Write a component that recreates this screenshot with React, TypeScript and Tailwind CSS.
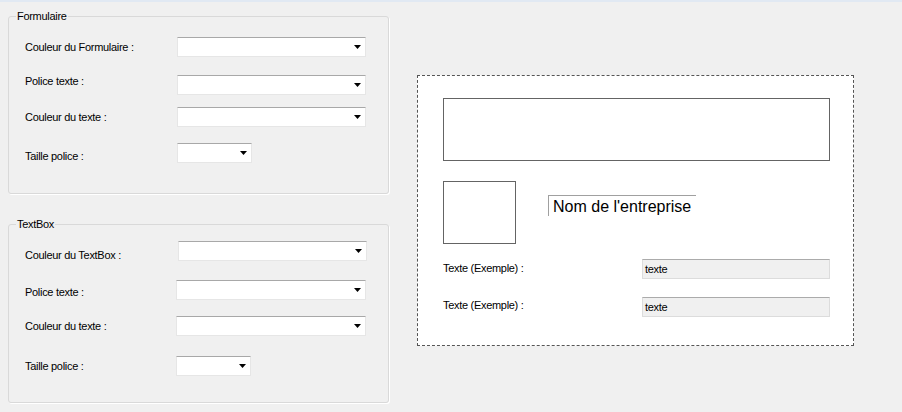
import React from 'react';

const font = { fontFamily: '"Liberation Sans", Arial, sans-serif' };

function Combo({ width, className = '' }: { width: string; className?: string }) {
  return (
    <div
      className={`relative h-[20px] ${width} shrink-0 bg-white border border-[#e6e6e6] border-t-[#a8a8a8] ${className}`}
    >
      <svg
        className="absolute right-[4px] top-[7px]"
        width="7"
        height="4"
        viewBox="0 0 7 4"
      >
        <polygon points="0,0 7,0 3.5,4" fill="#000" />
      </svg>
    </div>
  );
}

interface Row {
  label: string;
  rowMt: string;
  labelMt: string;
  width: string;
  comboClass?: string;
}

function Group({ title, rows, height }: { title: string; rows: Row[]; height: string }) {
  return (
    <fieldset
      className={`w-[381px] ${height} border border-[#d9d9d9] rounded-[3px] shadow-[1px_1px_0_#ffffff]`}
    >
      <legend className="ml-[7px] px-[1px] text-[11px] leading-[13px] tracking-[-0.3px] text-black">
        {title}
      </legend>
      {rows.map((r) => (
        <div key={r.label} className={`flex items-start ${r.rowMt}`}>
          <span
            className={`ml-[16px] w-[152px] shrink-0 text-[11px] leading-[13px] tracking-[-0.3px] text-black ${r.labelMt}`}
          >
            {r.label}
          </span>
          <Combo width={r.width} className={r.comboClass} />
        </div>
      ))}
    </fieldset>
  );
}

export default function App() {
  const formRows: Row[] = [
    { label: 'Couleur du Formulaire :', rowMt: 'mt-[14px]', labelMt: 'mt-[4px]', width: 'w-[189px]' },
    { label: 'Police texte :', rowMt: 'mt-[18px]', labelMt: 'mt-0', width: 'w-[189px]' },
    { label: 'Couleur du texte :', rowMt: 'mt-[12px]', labelMt: 'mt-[4px]', width: 'w-[189px]' },
    { label: 'Taille police :', rowMt: 'mt-[16px]', labelMt: 'mt-[7px]', width: 'w-[75px]' },
  ];

  const textBoxRows: Row[] = [
    { label: 'Couleur du TextBox :', rowMt: 'mt-[10px]', labelMt: 'mt-[8px]', width: 'w-[189px]', comboClass: 'ml-px' },
    { label: 'Police texte :', rowMt: 'mt-[18px]', labelMt: 'mt-[6px]', width: 'w-[190px]', comboClass: '-ml-px' },
    { label: 'Couleur du texte :', rowMt: 'mt-[16px]', labelMt: 'mt-[4px]', width: 'w-[190px]', comboClass: '-ml-px' },
    { label: 'Taille police :', rowMt: 'mt-[20px]', labelMt: 'mt-[4px]', width: 'w-[75px]', comboClass: '-ml-px' },
  ];

  return (
    <div className="w-[902px] h-[412px] bg-[#f0f0f0] overflow-hidden" style={font}>
      <div className="h-[2px] bg-[#e1e9f3]" />
      <div className="flex items-start">
        {/* Colonne gauche */}
        <div className="ml-[8px] mt-[8px] flex flex-col gap-[24px]">
          <Group title="Formulaire" rows={formRows} height="h-[184px]" />
          <Group title="TextBox" rows={textBoxRows} height="h-[185px]" />
        </div>

        {/* Aperçu */}
        <div className="ml-[28px] mt-[73px] w-[437px] h-[271px] bg-white border border-dashed border-[#555555] pl-[25px] pt-[22px]">
          <div className="w-[387px] h-[63px] border border-[#646464]" />
          <div className="flex items-start mt-[20px]">
            <div className="w-[73px] h-[63px] border border-[#646464] shrink-0" />
            <div className="ml-[32px] mt-[14px] w-[148px] h-[21px] border-t border-l border-[#a0a0a0] pl-[4px] pt-[2px] text-[16px] leading-[18px] text-black whitespace-nowrap">
              Nom de l'entreprise
            </div>
          </div>
          <div className="flex items-start mt-[15px]">
            <span className="w-[199px] mt-[3px] shrink-0 text-[11px] leading-[13px] tracking-[-0.3px] text-black">
              Texte (Exemple) :
            </span>
            <div className="w-[188px] h-[20px] bg-[#f0f0f0] border border-[#dcdcdc] border-t-[#ababab] pl-[2px] flex items-center text-[11px] leading-[13px] tracking-[-0.3px] text-black">
              texte
            </div>
          </div>
          <div className="flex items-start mt-[18px]">
            <span className="w-[199px] mt-[2px] shrink-0 text-[11px] leading-[13px] tracking-[-0.3px] text-black">
              Texte (Exemple) :
            </span>
            <div className="w-[188px] h-[20px] bg-[#f0f0f0] border border-[#dcdcdc] border-t-[#ababab] pl-[2px] flex items-center text-[11px] leading-[13px] tracking-[-0.3px] text-black">
              texte
            </div>
          </div>
        </div>
      </div>
    </div>
  );
}
